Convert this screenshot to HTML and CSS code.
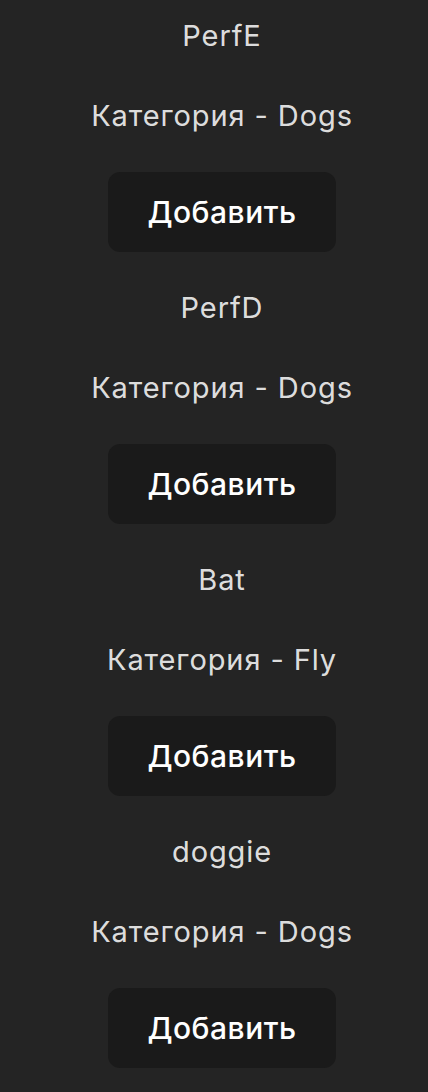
FILE: index.html
```html
<!DOCTYPE html>
<html lang="ru">
<head>
<meta charset="utf-8">
<title>Animals</title>
<link rel="stylesheet" href="styles.css">
</head>
<body>
<div class="list">
  <div class="item">
    <p class="name">PerfE</p>
    <p class="cat">Категория - Dogs</p>
    <button class="btn">Добавить</button>
  </div>
  <div class="item">
    <p class="name">PerfD</p>
    <p class="cat">Категория - Dogs</p>
    <button class="btn">Добавить</button>
  </div>
  <div class="item">
    <p class="name">Bat</p>
    <p class="cat">Категория - Fly</p>
    <button class="btn">Добавить</button>
  </div>
  <div class="item">
    <p class="name">doggie</p>
    <p class="cat">Категория - Dogs</p>
    <button class="btn">Добавить</button>
  </div>
</div>
</body>
</html>
```
FILE: styles.css
```css
html, body {
  margin: 0;
  padding: 0;
  background: #242424;
}
body {
  font-family: Inter, "Noto Sans", sans-serif;
  font-size: 29px;
  color: rgba(255, 255, 255, 0.87);
}
.list {
  display: flex;
  flex-direction: column;
  align-items: center;
  padding-top: 16px;
  padding-left: 16px;
}
.item {
  display: flex;
  flex-direction: column;
  align-items: center;
  margin-bottom: 36px;
}
.name, .cat {
  margin: 0;
  line-height: 40px;
  font-weight: 400;
  letter-spacing: 0.9px;
}
.name {
  margin-bottom: 40px;
}
.cat {
  margin-bottom: 36px;
}
.btn {
  width: 228px;
  height: 80px;
  border: none;
  border-radius: 12px;
  background: #1a1a1a;
  color: #ffffff;
  font-family: inherit;
  font-size: 30px;
  font-weight: 500;
  letter-spacing: 0.5px;
  padding: 0;
}
```
